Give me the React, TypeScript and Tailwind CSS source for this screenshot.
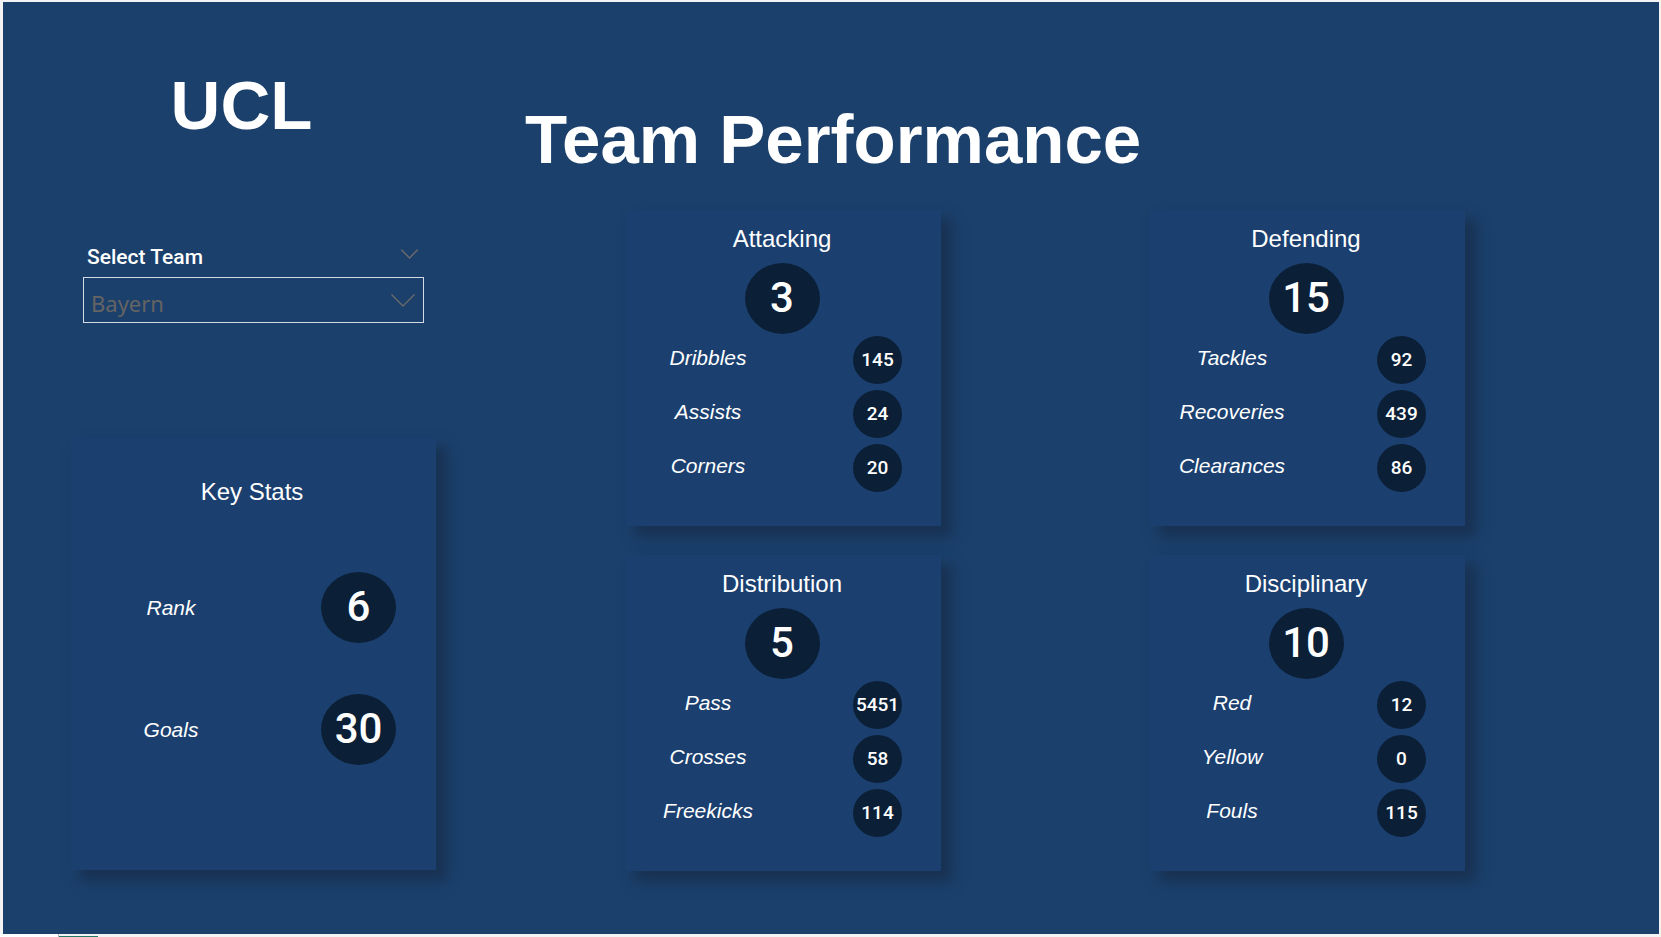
import { ChangeEvent, useState } from "react";

type Stat = { label: string; value: number };
type Category = { title: string; score: number; stats: Stat[] };

const categories: Category[] = [
  {
    title: "Attacking",
    score: 3,
    stats: [
      { label: "Dribbles", value: 145 },
      { label: "Assists", value: 24 },
      { label: "Corners", value: 20 },
    ],
  },
  {
    title: "Defending",
    score: 15,
    stats: [
      { label: "Tackles", value: 92 },
      { label: "Recoveries", value: 439 },
      { label: "Clearances", value: 86 },
    ],
  },
  {
    title: "Distribution",
    score: 5,
    stats: [
      { label: "Pass", value: 5451 },
      { label: "Crosses", value: 58 },
      { label: "Freekicks", value: 114 },
    ],
  },
  {
    title: "Disciplinary",
    score: 10,
    stats: [
      { label: "Red", value: 12 },
      { label: "Yellow", value: 0 },
      { label: "Fouls", value: 115 },
    ],
  },
];

const keyStats: Stat[] = [
  { label: "Rank", value: 6 },
  { label: "Goals", value: 30 },
];

function Chevron({ className }: { className: string }) {
  return (
    <svg
      viewBox="0 0 24 13"
      fill="none"
      stroke="currentColor"
      strokeWidth="1.4"
      aria-hidden="true"
      className={className}
    >
      <path d="M0.5 0.5 L12 12 L23.5 0.5" vectorEffect="non-scaling-stroke" />
    </svg>
  );
}

function BigScore({ value }: { value: number }) {
  return (
    <span className="flex h-[71px] w-[75px] items-center justify-center rounded-[50%] bg-[#0b1f37] pb-[2px] font-['Roboto',sans-serif] text-[42px] leading-none font-medium">
      {value}
    </span>
  );
}

function CategoryCard({ category }: { category: Category }) {
  return (
    <section className="h-[316px] bg-[#1b406f] pt-[14px] shadow-[10px_10px_12px_1px_rgba(23,47,77,0.85)]">
      <div className="flex flex-col items-center pr-[3px]">
        <h2 className="text-2xl leading-[30px]">{category.title}</h2>
        <div className="mt-[9px]">
          <BigScore value={category.score} />
        </div>
      </div>
      <dl className="mt-[2px] flex flex-col gap-[6px]">
        {category.stats.map((stat) => (
          <div key={stat.label} className="flex items-center pr-[39px]">
            <dt className="w-[164px] pb-[5px] text-center text-[21px] leading-6 italic">{stat.label}</dt>
            <dd className="ml-auto flex h-12 w-[49px] items-center justify-center rounded-[50%] bg-[#0b1f37] pb-[2px] font-['Roboto',sans-serif] text-[19px] leading-none font-medium">
              {stat.value}
            </dd>
          </div>
        ))}
      </dl>
    </section>
  );
}

function TeamFilter() {
  const [team, setTeam] = useState("Bayern");
  return (
    <div className="mx-3">
      <div className="flex h-8 items-start justify-between pr-[6px] pl-1">
        <label htmlFor="team" className="font-['Roboto',sans-serif] text-[21px] leading-6 font-medium">
          Select Team
        </label>
        <button type="button" aria-label="Team filter options" className="mt-1 text-[#6b6a6a]">
          <Chevron className="h-[10px] w-[17px]" />
        </button>
      </div>
      <div className="relative">
        <select
          id="team"
          value={team}
          onChange={(e: ChangeEvent<HTMLSelectElement>) => setTeam(e.target.value)}
          className="block h-[46px] w-full appearance-none border border-[#d3dbe6] bg-transparent pt-[5px] pl-[7px] font-['Noto_Sans','Open_Sans',sans-serif] text-[22px] leading-8 text-[#666463] outline-none"
        >
          <option>Bayern</option>
        </select>
        <Chevron className="pointer-events-none absolute top-[17px] right-[9px] h-[13px] w-6 text-[#6b6a6a]" />
      </div>
    </div>
  );
}

export default function App() {
  return (
    <div className="flex min-h-screen flex-col bg-[#f3f3f3] pt-[2px] pr-[2px] pl-[3px] font-['Liberation_Sans',Arial,sans-serif] text-white">
      <div className="flex grow items-start bg-[#1b406c] pb-[61px]">
        <aside className="ml-[68px] w-[365px] shrink-0 pt-16">
          <h1 className="pr-6 text-center text-[69px] leading-[80px] font-bold">UCL</h1>
          <div className="mt-[99px]">
            <TeamFilter />
          </div>
          <section className="mt-[115px] h-[432px] bg-[#1b406f] pt-[39px] shadow-[10px_10px_12px_1px_rgba(23,47,77,0.85)]">
            <h2 className="pr-[3px] text-center text-2xl leading-[30px]">Key Stats</h2>
            <dl className="mt-[65px] flex flex-col gap-[51px]">
              {keyStats.map((stat) => (
                <div key={stat.label} className="flex items-center justify-between pr-10">
                  <dt className="w-[200px] text-center text-[21px] leading-6 italic">{stat.label}</dt>
                  <dd>
                    <BigScore value={stat.value} />
                  </dd>
                </div>
              ))}
            </dl>
          </section>
        </aside>
        <main className="grow pt-[98px]">
          <h1 className="pl-[89px] text-[69px] leading-[80px] font-bold">Team Performance</h1>
          <div className="mt-[30px] grid grid-cols-[315px_315px] justify-between gap-y-[29px] pr-[194px] pl-[190px]">
            {categories.map((category) => (
              <CategoryCard key={category.title} category={category} />
            ))}
          </div>
        </main>
      </div>
      <footer className="-ml-[3px] flex h-[3px]">
        <div className="w-[59px] border-r border-[#b5b5b5] bg-white" />
        <div className="mt-[2px] w-[39px] bg-[#217a64]" />
      </footer>
    </div>
  );
}
